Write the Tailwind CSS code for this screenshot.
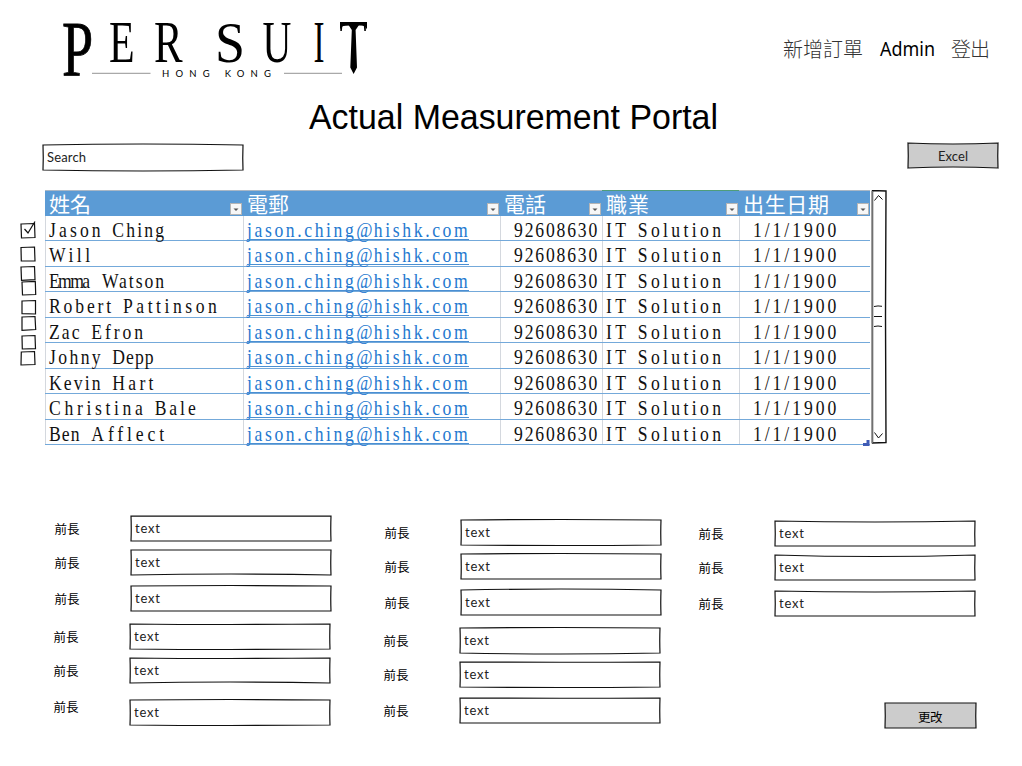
<!DOCTYPE html>
<html lang="zh-Hant">
<head>
<meta charset="utf-8">
<title>Actual Measurement Portal</title>
<script src="https://cdn.jsdelivr.net/npm/@tailwindcss/browser@4"></script>
</head>
<body class="bg-white text-black">
<div class="flex h-[766px] w-[1022px] flex-col overflow-hidden bg-white">
  <header class="flex h-[90px] shrink-0 items-start justify-between pl-[60px] pr-[32px]">
    <svg class="h-[90px] w-[312px] overflow-visible font-['Liberation_Serif',serif]" viewBox="60 0 312 90" fill="#000">
      <defs><clipPath id="bar"><rect x="335" y="15" width="15" height="16"/><rect x="350" y="15" width="8" height="8"/><rect x="358" y="15" width="14" height="16"/></clipPath></defs>
      <text transform="translate(62 74.500) scale(.71 1)" font-size="79" stroke="#000" stroke-width=".8">P</text>
      <text transform="translate(109 62) scale(.7 1)" font-size="60">E</text>
      <text transform="translate(154 62) scale(.715 1)" font-size="60">R</text>
      <text transform="translate(215 61.500) scale(.93 1)" font-size="58">S</text>
      <text transform="translate(262.500 62) scale(.665 1)" font-size="60">U</text>
      <text transform="translate(313.500 62) scale(.55 1)" font-size="60">I</text>
      <g clip-path="url(#bar)"><text transform="translate(339.500 61) scale(.765 1)" font-size="58">T</text></g>
      <path d="M340 22H367V29.500Q365.500 25 359 25L355.600 30L357 67.500L353.600 74L350.300 67.500L351.800 30L348.500 25Q341.500 25 340 29.500Z"/>
      <path d="M92 73.300H150.500M284 73.300H342" stroke="#777" stroke-width=".8"/>
      <text class="font-['Lato',sans-serif]" x="162" y="77" font-size="9.500" textLength="109">HONG KONG</text>
    </svg>
    <nav class="flex gap-[17px] pt-[34px] font-['Noto_Sans_CJK_TC',sans-serif] font-light">
      <svg class="h-[32px] w-[80px] overflow-visible"><text x="0" y="22.500" font-size="20" textLength="80" fill="#333">新增訂單</text></svg>
      <svg class="h-[32px] w-[56px] overflow-visible font-['Noto_Sans',sans-serif] font-normal"><text x="0" y="22" font-size="20" textLength="55" lengthAdjust="spacingAndGlyphs">Admin</text></svg>
      <svg class="-ml-[2px] h-[32px] w-[39px] overflow-visible"><text x="0" y="22.500" font-size="20" textLength="39" fill="#333">登出</text></svg>
    </nav>
  </header>
  <h1 class="flex h-[52px] shrink-0 pl-[309px] font-['Liberation_Sans',sans-serif]">
    <svg class="h-[52px] w-[412px] overflow-visible"><text x="0" y="39" font-size="35" textLength="409" lengthAdjust="spacingAndGlyphs">Actual Measurement Portal</text></svg>
  </h1>
  <section id="toolbar" class="flex h-[48px] shrink-0 justify-between pl-[42px] pr-[23px]"></section>
  <main class="flex h-[260px] shrink-0 pl-[18px]">
    <svg class="h-[260px] w-[27px] shrink-0" viewBox="18 190 27 260" fill="none" stroke="#111" stroke-width="1.200">
      <path d="M21 224L34.500 223.500L35 237.500L21.500 238ZM24.500 229L28 233L35 221.500"/>
      <path d="M21 247.500L34.500 247L35 261L21.300 261Z"/>
      <path d="M21 267L34.500 266.500L35 279.700L21.500 280.300Z"/>
      <path d="M22 282L35.300 281.300L35.700 294.500L22.500 295Z"/>
      <path d="M22 301L35.500 300.500V314L22 313.700Z"/>
      <path d="M22 317L35 316.500L35.700 329.500L22 330.300Z"/>
      <path d="M22 336L35 335.500L35.500 348.700L22.300 349Z"/>
      <path d="M21.300 352L34.500 351.500L35 364.500L21 365Z"/>
    </svg>
    <div class="relative mr-[1px] w-[825px] shrink-0">
      <div class="grid h-[26px] grid-cols-[198px_256.500px_102px_137px_131.500px] border-t border-[#aab8c6] bg-[#5b9bd5]" id="head"></div>
      <div id="rows"></div>
      <svg class="absolute bottom-[4px] right-0 h-[6px] w-[7px]" viewBox="0 0 7 6"><path d="M0 6V3H3.500V0H6.500V6Z" fill="#3f5bb5"/></svg>
    </div>
    <svg class="h-[256px] w-[18px] shrink-0" viewBox="871 190 18 256" fill="none" stroke="#111">
      <path d="M872.500 190.500L886 191L885.500 316L886 442.500L872.500 443Z" stroke-width="1.400"/>
      <path d="M872.200 191V443" stroke="#777" stroke-width="1.500"/>
      <path d="M874.500 200.500L878.500 195.500L882.500 199.500M874.500 432.500L878.500 438L882.500 433.500M874 306.500Q878 305.500 882 306.300M874 316.500H882M874 326.500Q878 325.500 882 326.500"/>
    </svg>
  </main>
  <section id="form" class="relative flex h-[316px] shrink-0 items-start"></section>
</div>
<script>
const hand = "font-['Lato',sans-serif]";
const sketchText = (s, w) => `<svg class="absolute left-[5px] top-[5px] h-[18px] w-[90px] overflow-visible ${hand}"><text x="0" y="13" font-size="13" fill="#222" textLength="${w}">${s}</text></svg>`;
const box = (w, a, b, fill) => `<svg class="absolute inset-0 h-[28px] w-full overflow-visible" fill="${fill}"><path d="M1 1Q${w / 2} ${1 + a} ${w - 1} 1Q${w - 1.5} 14 ${w - 1} 26Q${w / 2} ${26 + b} 1 26Q1.5 14 1 1Z" stroke="#111" stroke-width="1.200"/></svg>`;
const input = (s, w, a, b) => `<div class="relative h-[28px] w-[202px] shrink-0">${box(202, a, b, '#fff')}${sketchText(s, w)}</div>`;

document.getElementById('toolbar').innerHTML =
  `<div class="pt-[2px]">${input('Search', 39, -2, 2)}</div>
   <button class="relative h-[28px] w-[92px]">${box(92, 2, -2, '#ccc')}<svg class="absolute left-[31px] top-[4px] h-[20px] w-[36px] overflow-visible ${hand}"><text x="0" y="15" font-size="13" fill="#222" textLength="30">Excel</text></svg></button>`;

const heads = [['姓名', 42], ['電郵', 42], ['電話', 42], ['職業', 43], ['出生日期', 86]];
document.getElementById('head').innerHTML = heads.map(([h, w], i) =>
  `<div class="flex items-end justify-between pb-[1px] pl-[4px] pr-[1px] ${i === 3 ? 'shadow-[0_-1px_0_#4f9d7a]' : ''}">
    <svg class="h-[24px] w-[90px] overflow-visible font-['Noto_Sans_CJK_TC',sans-serif] font-normal"><text x="0" y="21" font-size="21" fill="#fff" textLength="${w}">${h}</text></svg>
    <svg class="-ml-[60px] h-[12px] w-[12px] shrink-0" viewBox="0 0 12 12"><rect x=".5" y=".5" width="11" height="11" fill="#f7f7f7" stroke="#b5b5b5"/><path d="M3.500 5.500H8.500L6 8Z" fill="#555"/></svg>
  </div>`).join('');

// Condensed serif set on a fixed character pitch, word by word.
const CONDENSE = 0.82, PITCH = 10.57 / CONDENSE;
const gridText = s => {
  let at = 0;
  return s.split(/(?<=[ @])/).map(part => {
    const word = part.trimEnd(), x = at * PITCH;
    at += part.length;
    return `<tspan x="${x.toFixed(1)}" textLength="${(word.length * PITCH - 1.5).toFixed(1)}">${word}</tspan>`;
  }).join(' ');
};
const cell = (s, cls, ul) =>
  `<div class="flex border-l border-[#d4d8de] ${cls}"><svg class="h-[24px] w-[225px] shrink-0 overflow-visible font-['Liberation_Serif',serif]"><text transform="scale(${CONDENSE} 1)" x="0" y="21" font-size="21.500" fill="${ul ? '#2478cf' : '#111'}">${gridText(s)}</text>${ul ? '<path d="M0 23.500H222" stroke="#4a8fd3" stroke-width="1.200"/>' : ''}</svg></div>`;
document.getElementById('rows').innerHTML = ['Jason Ching', 'Will', 'Emma Watson', 'Robert Pattinson', 'Zac Efron', 'Johny Depp', 'Kevin Hart', 'Christina Bale', 'Ben Afflect'].map(n =>
  `<div class="grid h-[25.470px] grid-cols-[198px_256.500px_102px_137px_131.500px] border-b border-[#74a9da]">
    ${cell(n, 'pl-[3px]')}${cell('jason.ching@hishk.com', 'pl-[3px]', true)}${cell('92608630', 'pl-[13px]')}${cell('IT Solution', 'pl-[3px]')}${cell('1/1/1900', 'pl-[13px]')}
  </div>`).join('');

const label = s => `<svg class="h-[18px] w-[28px] shrink-0 overflow-visible font-['Noto_Sans_CJK_TC',sans-serif]"><text x="0.500" y="14" font-size="12.500" textLength="25">${s}</text></svg>`;
const row = (r, shift) => `<div class="flex ${r.gap} ${shift ? '-ml-[1px]' : ''}"><div class="w-[75.500px] shrink-0 ${r.lift ? '-mt-[1px]' : 'pt-[5px]'}">${label('前長')}</div>${input('text', 25, r.a, r.b)}</div>`;
const R = (gap, a, b, lift) => ({ gap, a, b, lift });
const cols = [
  ['ml-[54px] mt-[65px]', [R('', .3, 0), R('mt-[6px]', 0, -2), R('mt-[8px]', -1, 0), R('mt-[10px]', 1, 1), R('mt-[6px]', 1, -2), R('mt-[14px]', -1, 1, true)]],
  ['ml-[53px] mt-[69px]', [R('', -1, 1), R('mt-[6px]', -1, 0), R('mt-[8px]', -2, 0), R('mt-[10px]', -1, 2), R('mt-[6px]', .5, 1), R('mt-[8px]', .5, 0)]],
  ['ml-[37px] mt-[70px]', [R('', 2, 0), R('mt-[6px]', 3, 0), R('mt-[8px]', 2, 0)]]
];
document.getElementById('form').innerHTML = cols.map(([c, rs]) => `<div class="w-[277px] shrink-0 ${c}">${rs.map((r, i) => row(r, i > 2)).join('')}</div>`).join('') +
  `<button class="absolute left-[884px] top-[252px] h-[28px] w-[93px]">${box(93, 0, 0, '#ccc')}<svg class="absolute left-[34px] top-[5px] h-[20px] w-[30px] overflow-visible font-['Noto_Sans_CJK_TC',sans-serif]"><text x="0" y="15" font-size="12.500" textLength="24.500">更改</text></svg></button>`;
</script>
</body>
</html>
